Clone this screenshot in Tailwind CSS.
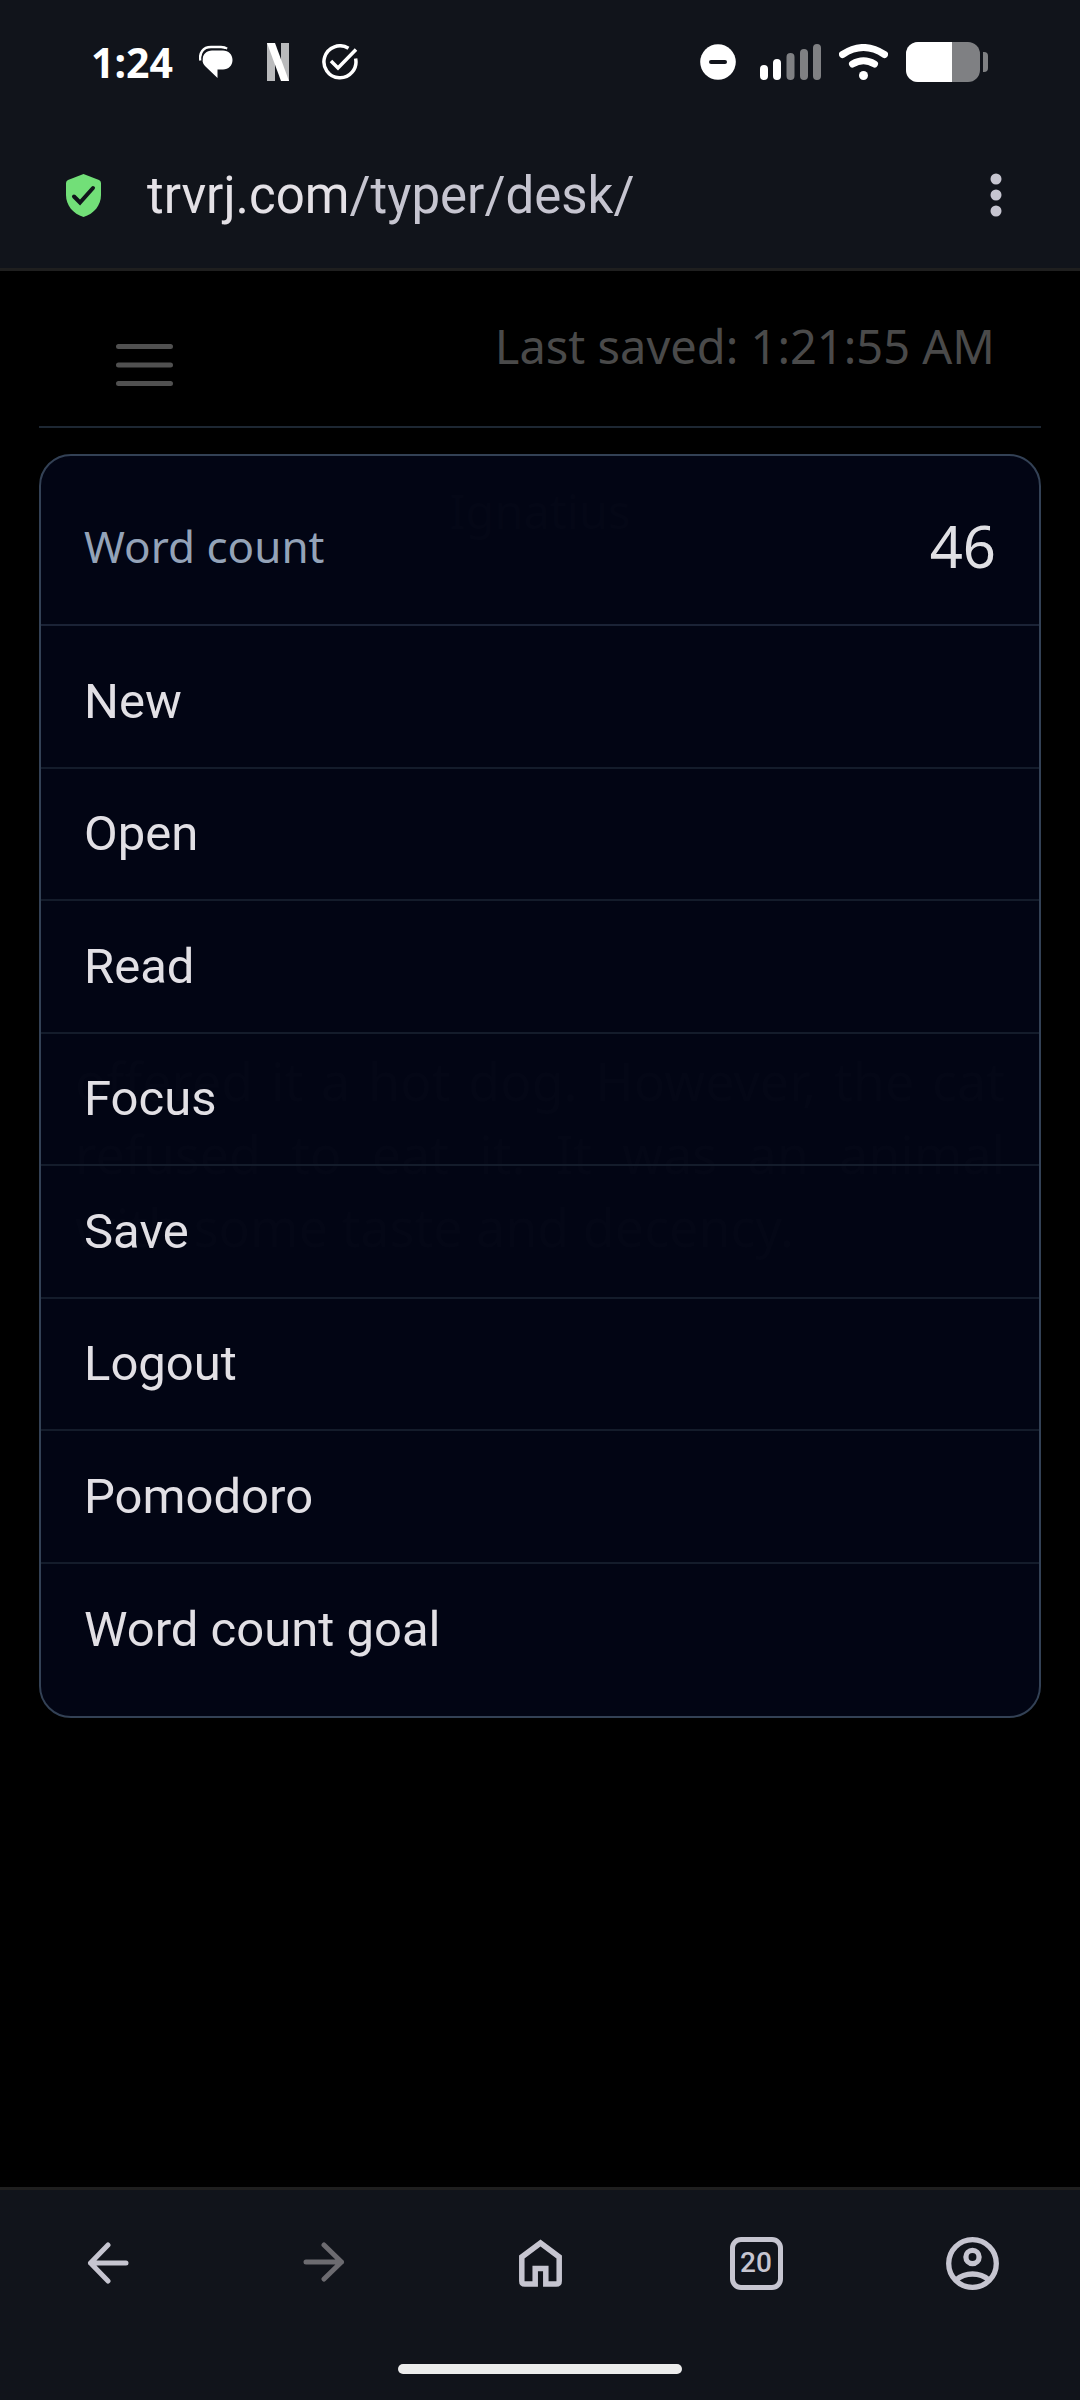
<!DOCTYPE html>
<html lang="en">

<head>
    <meta charset="UTF-8">
    <meta name="viewport" content="width=device-width, initial-scale=1.0">
    <title>Typer - Desk</title>
    <script src="https://cdn.jsdelivr.net/npm/@tailwindcss/browser@4"></script>
</head>

<body class="min-h-screen flex flex-col bg-black font-['Roboto',sans-serif]">
    <!-- Browser top -->
    <header class="bg-[#11141b] border-b-3 border-[#1f1f1f]">
        <!-- Status bar -->
        <div class="h-[124px] flex items-center justify-between pl-[91px] pr-[92px] text-white">
            <div class="flex items-center">
                <span class="text-[41px] leading-none font-bold font-['Noto_Sans',sans-serif]">1:24</span>
                <svg class="ml-[26px] w-[34px] h-[34px]" viewBox="0 0 34 34" fill="currentColor">
                    <path d="M13 5.500h11c5.500 0 9.500 4 9.500 9.500s-4 9.500-9.500 9.500h-5.500V33L6.500 21.500C4.500 19.500 3.500 17.500 3.500 15c0-5.500 4-9.500 9.500-9.500z" />
                    <path d="M1.500 15.500C0 8 4 2 12 2h10c2.500 0 4.500.6 6 1.800" fill="none" stroke="currentColor" stroke-width="2.500" />
                    <path d="M3 15.500C2.500 9 6 4.500 12 4.500h15" fill="none" stroke="#11141b" stroke-width="1" />
                </svg>
                <svg class="ml-[34px] w-[22px] h-[38px]" viewBox="0 0 22 38">
                    <path d="M0 0h8v38H0zM14 0h8v38h-8z" fill="#b9babc" />
                    <path d="M0 0h8l14 38h-8z" fill="#fff" />
                </svg>
                <svg class="ml-[33px] w-9 h-9" viewBox="0 0 36 36" fill="none" stroke="currentColor" stroke-width="3.500">
                    <path d="M26.500 4.300A16 16 0 1 0 33.600 14.500" />
                    <path d="M9 17l7 7L34 5.500" />
                </svg>
            </div>
            <div class="flex items-center">
                <svg class="w-9 h-9" viewBox="0 0 36 36">
                    <circle cx="18" cy="18" r="17.800" fill="#fff" />
                    <path d="M11 18h14" stroke="#11141b" stroke-width="4" stroke-linecap="round" />
                </svg>
                <svg class="ml-6 w-[61px] h-9" viewBox="0 0 61 36" stroke-width="8" stroke-linecap="round">
                    <path d="M4 25v7M17 19v13" stroke="#fff" />
                    <path d="M30.500 13v19M44 9v23M57 4v28" stroke="#7f8083" />
                </svg>
                <svg class="ml-[18px] w-[49px] h-9" viewBox="0 0 49 36" fill="none" stroke="#fff" stroke-width="7" stroke-linecap="round">
                    <path d="M3.500 10.500Q24.500-3.500 45.500 10.500" />
                    <path d="M13.500 20Q24.500 13.500 35.500 20" />
                    <circle cx="24.500" cy="31.500" r="4.500" fill="#fff" stroke="none" />
                </svg>
                <div class="ml-[18px] w-[74px] h-10 rounded-xl overflow-hidden bg-[#7f8083]">
                    <div class="h-full bg-white" style="width: 62%"></div>
                </div>
                <div class="ml-[3px] w-[5px] h-5 rounded-r-sm bg-[#7f8083]"></div>
            </div>
        </div>
        <!-- Address bar -->
        <div class="h-36 pb-0.5 flex items-center justify-between pl-[66px] pr-[78px]">
            <div class="flex items-center gap-[46px]">
                <svg class="w-[35px] h-[43px]" viewBox="0 0 35 43">
                    <path d="M17.500 0L33 6q2 1 2 3v12c0 10-7 19-17.500 22C7 40 0 31 0 21V9q0-2 2-3z" fill="#72df78" />
                    <path d="M8 22.500l6 6L27 14" fill="none" stroke="#11141b" stroke-width="4" stroke-linecap="round" />
                </svg>
                <a href="#" class="text-[51px] leading-none text-[#c6c5d0]"><span class="text-[#e4e1e6]">trvrj.com</span>/typer/desk/</a>
            </div>
            <button type="button" aria-label="Browser menu">
                <svg class="w-3 h-11" viewBox="0 0 12 44" fill="#c6c5d0">
                    <circle cx="6" cy="6" r="5.500" />
                    <circle cx="6" cy="22" r="5.500" />
                    <circle cx="6" cy="38" r="5.500" />
                </svg>
            </button>
        </div>
    </header>

    <!-- Page -->
    <main class="relative flex-1 px-[39px] font-['Noto_Sans',sans-serif]">
        <div class="flex items-start justify-between pt-[45px] pb-3 pl-[77px] pr-[46px] border-b-2 border-[#1d2733]">
            <button type="button" aria-label="Menu" class="h-[98px] flex items-center">
                <svg class="w-[57px] h-[42px]" viewBox="0 0 57 42" stroke="#505050" stroke-width="5" stroke-linecap="round">
                    <path d="M2.500 2.500h52M2.500 21h52M2.500 39.500h52" />
                </svg>
            </button>
            <p class="text-[47px] leading-[60px] text-[#4a4a4a]">Last saved: 1:21:55 AM</p>
        </div>

        <!-- Editor -->
        <div class="px-8 pt-[53px] text-[#404040]">
            <input type="text" aria-label="Title" value="Ignatius" class="block w-full text-center text-[47px] leading-[60px]">
            <textarea aria-label="Text" rows="3" class="block w-full mt-[503px] px-1 text-[52px] leading-[73px] text-justify resize-none overflow-hidden">offered it a hot dog. However, the cat refused to eat it. It was an animal with some taste and decency.</textarea>
        </div>

        <!-- Dropdown menu -->
        <nav class="absolute top-[183px] inset-x-[39px] rounded-[32px] border-2 border-[#334155] bg-[#020515]/97">
            <div class="h-[170px] flex items-center justify-between pt-3 px-[43px] border-b-2 border-[#1b2336]">
                <span class="text-[44px] leading-none text-[#94a3b8]">Word count</span>
                <span class="text-[58px] leading-none text-[#e0e0e4]">46</span>
            </div>
            <div class="grid auto-rows-fr min-h-[1090px] pt-2.5 pb-5 divide-y-2 divide-[#141c2b] font-['Roboto',sans-serif] text-[49px] text-[#e2e0e5]">
                <button type="button" class="px-[43px] text-left">New</button>
                <button type="button" class="px-[43px] text-left">Open</button>
                <button type="button" class="px-[43px] text-left">Read</button>
                <button type="button" class="px-[43px] text-left">Focus</button>
                <button type="button" class="px-[43px] text-left">Save</button>
                <button type="button" class="px-[43px] text-left">Logout</button>
                <button type="button" class="px-[43px] text-left">Pomodoro</button>
                <button type="button" class="px-[43px] text-left">Word count goal</button>
            </div>
        </nav>
    </main>

    <!-- Browser bottom -->
    <footer class="bg-[#11141b] border-t-3 border-[#1f1f1f] pb-[26px]">
        <div class="h-[146px] grid grid-cols-5 place-items-center text-[#c6c5d0]">
            <button type="button" aria-label="Back">
                <svg class="w-[42px] h-[42px]" viewBox="0 0 42 42" fill="none" stroke="currentColor" stroke-width="5" stroke-linecap="round" stroke-linejoin="round">
                    <path d="M39 21H3.500M21 3L3.500 21 21 39" />
                </svg>
            </button>
            <button type="button" aria-label="Forward" disabled class="text-[#6c6b70]">
                <svg class="w-[42px] h-[42px]" viewBox="0 0 42 42" fill="none" stroke="currentColor" stroke-width="5" stroke-linecap="round" stroke-linejoin="round">
                    <path d="M3 20h35.500M21 3l17.500 17L21 37" />
                </svg>
            </button>
            <button type="button" aria-label="Home">
                <svg class="w-[43px] h-[48px]" viewBox="0 0 43 48" fill="none" stroke="currentColor" stroke-width="5.500">
                    <path d="M21.500 4L2.800 18v24q0 3 3 3h10.400V29.500h10.600V45h10.400q3 0 3-3V18z" />
                </svg>
            </button>
            <button type="button" aria-label="Tabs" class="w-[53px] h-[53px] rounded-[11px] border-5 border-[#c6c5d0] text-[28px] leading-none font-medium">20</button>
            <button type="button" aria-label="Profile">
                <svg class="w-[53px] h-[53px]" viewBox="0 0 53 53" fill="none" stroke="currentColor" stroke-width="5.300">
                    <circle cx="26.500" cy="26.500" r="23.800" />
                    <circle cx="26.500" cy="20" r="6.600" />
                    <path d="M10 43Q17 37 26.500 37T43 43" />
                </svg>
            </button>
        </div>
        <div class="mt-7 mx-auto w-[284px] h-2.5 rounded-full bg-[#ececec]"></div>
    </footer>
</body>

</html>
